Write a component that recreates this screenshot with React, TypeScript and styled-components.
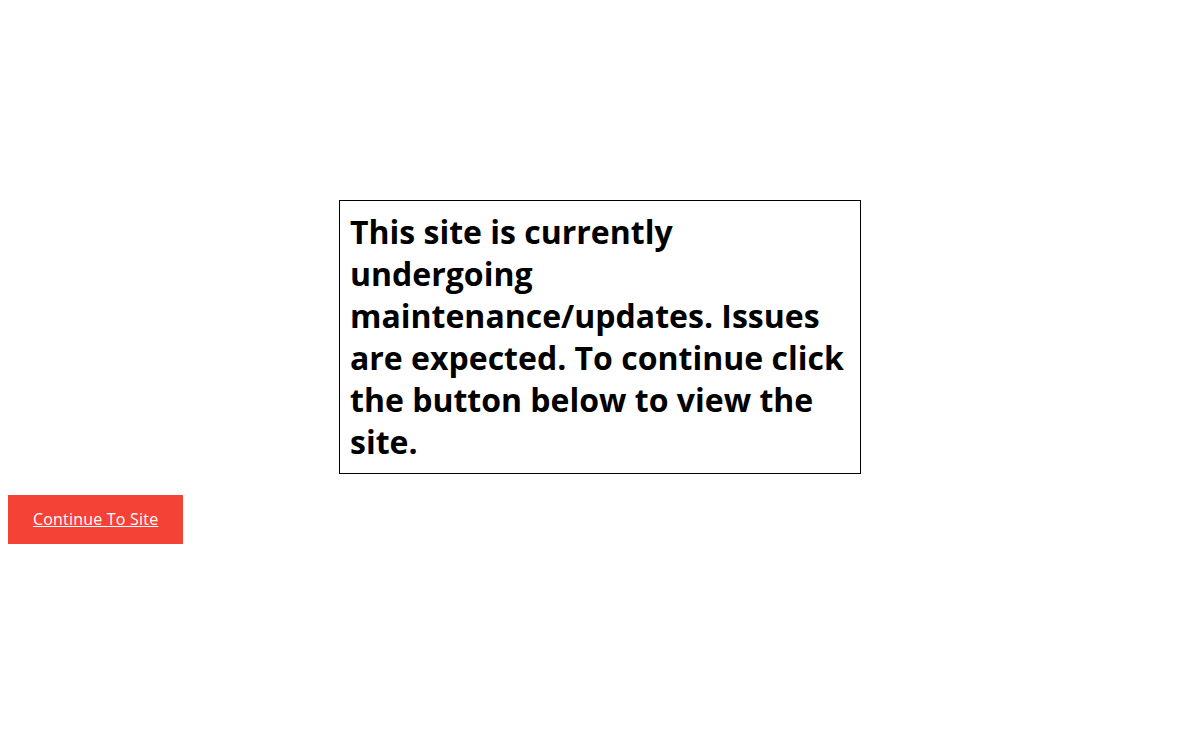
import React from "react"
import styled, { createGlobalStyle } from "styled-components"

const GlobalStyle = createGlobalStyle`
  body {
    margin: 8px;
    background: #fff;
    font-family: "Open Sans", "Noto Sans", Arial, sans-serif;
  }
`

const Notice = styled.div`
  width: 500px;
  margin: 192px auto 0;
  padding: 10px;
  border: 1px solid #000;
  h1 {
    margin: 0;
    font-family: "Open Sans", "Noto Sans", Arial, sans-serif;
    font-weight: 700;
    font-size: 32px;
    line-height: 42px;
    color: #000;
  }
`

const Actions = styled.div`
  margin-top: 21px;
`

const ContinueButton = styled.a`
  display: inline-block;
  background-color: #f44336;
  color: #fff;
  font-family: "Open Sans", "Noto Sans", Arial, sans-serif;
  font-size: 16px;
  letter-spacing: 0.2px;
  line-height: 21px;
  padding: 14px 25px;
  text-decoration: underline;
  cursor: pointer;
`

const App = () => {
  return (
    <>
      <GlobalStyle />
      <Notice>
        <h1>
          This site is currently undergoing maintenance/updates. Issues are
          expected. To continue click the button below to view the site.
        </h1>
      </Notice>
      <Actions>
        <ContinueButton href="#">Continue To Site</ContinueButton>
      </Actions>
    </>
  )
}

export default App
